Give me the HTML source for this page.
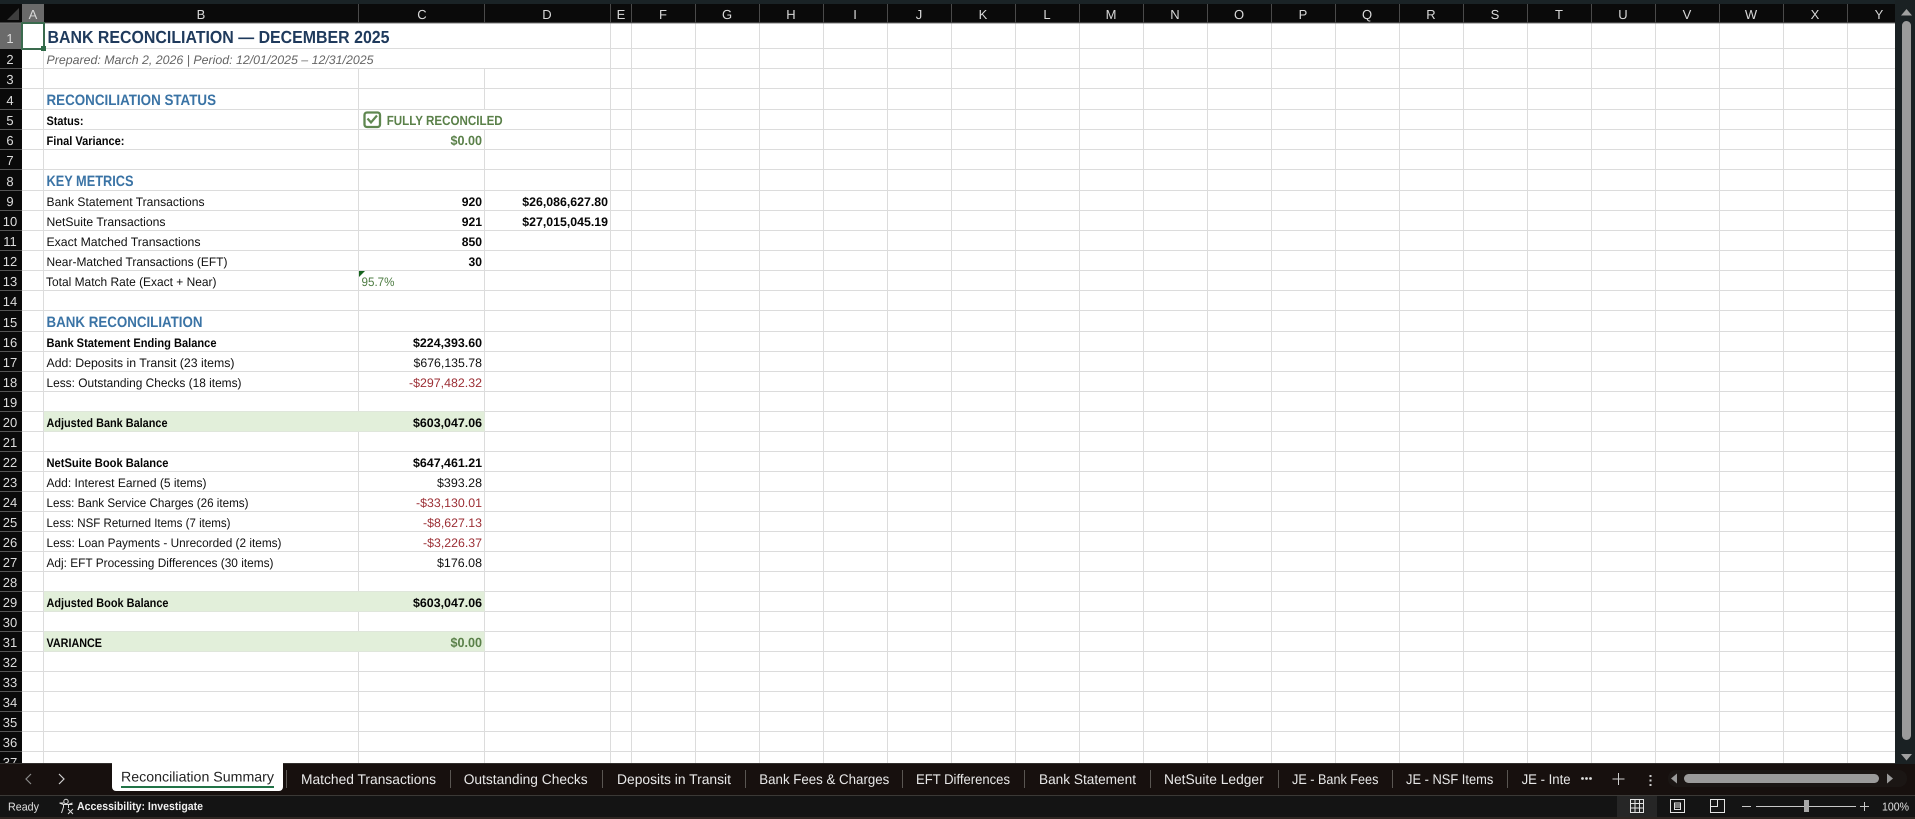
<!DOCTYPE html>
<html><head><meta charset="utf-8"><title>Bank Reconciliation</title>
<style>
html,body{margin:0;padding:0;background:#141414;overflow:hidden}
svg{display:block;text-rendering:geometricPrecision}
text{font-family:"Liberation Sans",Arial,sans-serif;white-space:pre}
.c{font-size:12.3px;fill:#111}
.b{font-size:12.3px;fill:#050505;font-weight:bold}
.r{font-size:12.3px;fill:#9c2f35}
.g{font-size:13.3px;fill:#5a8049;font-weight:bold}
.s{font-size:15px;fill:#3a73a5;font-weight:bold}
.rh{font-size:13px;fill:#dcdcdc;text-anchor:middle}
.ch{font-size:13px;fill:#d8d8d8;text-anchor:middle}
.t{font-size:14px;fill:#e8e8e8}
.st{font-size:11.5px;fill:#e0e0e0}
</style></head><body>
<svg width="1915" height="819" viewBox="0 0 1915 819" xmlns="http://www.w3.org/2000/svg">
<rect width="1915" height="819" fill="#141414"/>
<rect width="1915" height="5" fill="#1a2326"/>
<rect x="1895" width="20" height="763" fill="#1a2123"/>
<rect x="0" y="4" width="1895" height="19" fill="#0a0a0a"/>
<rect x="0" y="23" width="22" height="740" fill="#0a0a0a"/>
<rect x="22" y="23" width="1873" height="740" fill="#fff"/>
<path d="M22 48.5H1895M22 68.5H1895M22 88.5H1895M22 109.5H1895M22 129.5H1895M22 149.5H1895M22 169.5H1895M22 190.5H1895M22 210.5H1895M22 230.5H1895M22 250.5H1895M22 270.5H1895M22 290.5H1895M22 310.5H1895M22 331.5H1895M22 351.5H1895M22 371.5H1895M22 391.5H1895M22 411.5H1895M22 431.5H1895M22 451.5H1895M22 471.5H1895M22 491.5H1895M22 511.5H1895M22 531.5H1895M22 551.5H1895M22 571.5H1895M22 591.5H1895M22 611.5H1895M22 631.5H1895M22 651.5H1895M22 671.5H1895M22 691.5H1895M22 711.5H1895M22 731.5H1895M22 751.5H1895" stroke="#dcdcdc" fill="none"/>
<path d="M43.5 23V763M358.5 68V763M484.5 68V109M484.5 130V763M610.5 23V763M631.5 23V763M695.5 23V763M759.5 23V763M823.5 23V763M887.5 23V763M951.5 23V763M1015.5 23V763M1079.5 23V763M1143.5 23V763M1207.5 23V763M1271.5 23V763M1335.5 23V763M1399.5 23V763M1463.5 23V763M1527.5 23V763M1591.5 23V763M1655.5 23V763M1719.5 23V763M1783.5 23V763M1847.5 23V763" stroke="#dcdcdc" fill="none"/>
<rect x="44" y="411.5" width="440.5" height="20" fill="#e2efda"/>
<rect x="44" y="591.5" width="440.5" height="20" fill="#e2efda"/>
<rect x="44" y="631.5" width="440.5" height="20" fill="#e2efda"/>

<!-- headers -->
<rect x="22" y="4" width="22" height="19" fill="#6a6a6a"/>
<rect x="0" y="23" width="22" height="26" fill="#6a6a6a"/>
<polygon points="19,8 19,20 7,20" fill="#3e3e3e"/>
<rect x="0" y="22.5" width="1895" height="1" fill="#777"/>
<path d="M358.5 4V23M484.5 4V23M610.5 4V23M631.5 4V23M695.5 4V23M759.5 4V23M823.5 4V23M887.5 4V23M951.5 4V23M1015.5 4V23M1079.5 4V23M1143.5 4V23M1207.5 4V23M1271.5 4V23M1335.5 4V23M1399.5 4V23M1463.5 4V23M1527.5 4V23M1591.5 4V23M1655.5 4V23M1719.5 4V23M1783.5 4V23M1847.5 4V23" stroke="#4a4a4a" fill="none"/>
<path d="M0 68.5H22M0 88.5H22M0 109.5H22M0 129.5H22M0 149.5H22M0 169.5H22M0 190.5H22M0 210.5H22M0 230.5H22M0 250.5H22M0 270.5H22M0 290.5H22M0 310.5H22M0 331.5H22M0 351.5H22M0 371.5H22M0 391.5H22M0 411.5H22M0 431.5H22M0 451.5H22M0 471.5H22M0 491.5H22M0 511.5H22M0 531.5H22M0 551.5H22M0 571.5H22M0 591.5H22M0 611.5H22M0 631.5H22M0 651.5H22M0 671.5H22M0 691.5H22M0 711.5H22M0 731.5H22M0 751.5H22" stroke="#555" fill="none"/>
<g>
<text class="ch" x="33" y="19">A</text><text class="ch" x="201" y="19">B</text><text class="ch" x="422" y="19">C</text><text class="ch" x="547" y="19">D</text><text class="ch" x="621" y="19">E</text><text class="ch" x="663" y="19">F</text><text class="ch" x="727" y="19">G</text><text class="ch" x="791" y="19">H</text><text class="ch" x="855" y="19">I</text><text class="ch" x="919" y="19">J</text><text class="ch" x="983" y="19">K</text><text class="ch" x="1047" y="19">L</text><text class="ch" x="1111" y="19">M</text><text class="ch" x="1175" y="19">N</text><text class="ch" x="1239" y="19">O</text><text class="ch" x="1303" y="19">P</text><text class="ch" x="1367" y="19">Q</text><text class="ch" x="1431" y="19">R</text><text class="ch" x="1495" y="19">S</text><text class="ch" x="1559" y="19">T</text><text class="ch" x="1623" y="19">U</text><text class="ch" x="1687" y="19">V</text><text class="ch" x="1751" y="19">W</text><text class="ch" x="1815" y="19">X</text><text class="ch" x="1879" y="19">Y</text>
</g>
<g>
<text class="rh" x="10" y="43">1</text><text class="rh" x="10" y="64">2</text><text class="rh" x="10" y="84">3</text><text class="rh" x="10" y="105">4</text><text class="rh" x="10" y="125">5</text><text class="rh" x="10" y="145">6</text><text class="rh" x="10" y="165">7</text><text class="rh" x="10" y="186">8</text><text class="rh" x="10" y="206">9</text><text class="rh" x="10" y="226">10</text><text class="rh" x="10" y="246">11</text><text class="rh" x="10" y="266">12</text><text class="rh" x="10" y="286">13</text><text class="rh" x="10" y="306">14</text><text class="rh" x="10" y="327">15</text><text class="rh" x="10" y="347">16</text><text class="rh" x="10" y="367">17</text><text class="rh" x="10" y="387">18</text><text class="rh" x="10" y="407">19</text><text class="rh" x="10" y="427">20</text><text class="rh" x="10" y="447">21</text><text class="rh" x="10" y="467">22</text><text class="rh" x="10" y="487">23</text><text class="rh" x="10" y="507">24</text><text class="rh" x="10" y="527">25</text><text class="rh" x="10" y="547">26</text><text class="rh" x="10" y="567">27</text><text class="rh" x="10" y="587">28</text><text class="rh" x="10" y="607">29</text><text class="rh" x="10" y="627">30</text><text class="rh" x="10" y="647">31</text><text class="rh" x="10" y="667">32</text><text class="rh" x="10" y="687">33</text><text class="rh" x="10" y="707">34</text><text class="rh" x="10" y="727">35</text><text class="rh" x="10" y="747">36</text><text class="rh" x="10" y="767">37</text>
</g>

<!-- selected cell -->
<rect x="22" y="23" width="22" height="26" fill="none" stroke="#3a6b4e" stroke-width="2"/>
<rect x="41" y="46" width="5" height="5" fill="#2f6a48"/>

<!-- cells -->
<text x="47.5" y="43" font-size="17.5" font-weight="bold" fill="#1f3a5c" textLength="342" lengthAdjust="spacingAndGlyphs">BANK RECONCILIATION — DECEMBER 2025</text>
<text x="46.5" y="64" font-size="12.3" font-style="italic" fill="#666" textLength="327" lengthAdjust="spacingAndGlyphs">Prepared: March 2, 2026 | Period: 12/01/2025 – 12/31/2025</text>
<text class="s" x="46.5" y="105" textLength="169.5" lengthAdjust="spacingAndGlyphs">RECONCILIATION STATUS</text>
<text class="b" x="46.5" y="125" textLength="37" lengthAdjust="spacingAndGlyphs">Status:</text>
<text class="b" x="46.5" y="145" textLength="78" lengthAdjust="spacingAndGlyphs">Final Variance:</text>
<rect x="364.5" y="112.5" width="15.5" height="14.5" rx="2.5" fill="none" stroke="#5f8750" stroke-width="2.3"/>
<path d="M367.5 118.5L371 122.5L377 115.5" fill="none" stroke="#5f8750" stroke-width="2.2"/>
<text class="g" x="386.7" y="125" textLength="116" lengthAdjust="spacingAndGlyphs">FULLY RECONCILED</text>
<text class="g" x="450.5" y="145" textLength="31.5" lengthAdjust="spacingAndGlyphs">$0.00</text>

<text class="s" x="46.5" y="186" textLength="87" lengthAdjust="spacingAndGlyphs">KEY METRICS</text>
<text class="c" x="46.5" y="206" textLength="158" lengthAdjust="spacingAndGlyphs">Bank Statement Transactions</text>
<text class="c" x="46.5" y="226" textLength="119" lengthAdjust="spacingAndGlyphs">NetSuite Transactions</text>
<text class="c" x="46.5" y="246" textLength="154" lengthAdjust="spacingAndGlyphs">Exact Matched Transactions</text>
<text class="c" x="46.5" y="266" textLength="181" lengthAdjust="spacingAndGlyphs">Near-Matched Transactions (EFT)</text>
<text class="c" x="46" y="286" textLength="170.5" lengthAdjust="spacingAndGlyphs">Total Match Rate (Exact + Near)</text>
<text class="b" x="461.7" y="206" textLength="20.3" lengthAdjust="spacingAndGlyphs">920</text>
<text class="b" x="461.7" y="226" textLength="20.3" lengthAdjust="spacingAndGlyphs">921</text>
<text class="b" x="461.7" y="246" textLength="20.3" lengthAdjust="spacingAndGlyphs">850</text>
<text class="b" x="468.5" y="266" textLength="13.5" lengthAdjust="spacingAndGlyphs">30</text>
<text class="b" x="522.3" y="206" textLength="85.7" lengthAdjust="spacingAndGlyphs">$26,086,627.80</text>
<text class="b" x="522.3" y="226" textLength="85.7" lengthAdjust="spacingAndGlyphs">$27,015,045.19</text>
<polygon points="359,271 365,271 359,277" fill="#17641f"/>
<text x="361.5" y="286" font-size="12.3" fill="#4f7d44" textLength="33" lengthAdjust="spacingAndGlyphs">95.7%</text>

<text class="s" x="46.5" y="327" textLength="156" lengthAdjust="spacingAndGlyphs">BANK RECONCILIATION</text>
<text class="b" x="46.5" y="347" textLength="170" lengthAdjust="spacingAndGlyphs">Bank Statement Ending Balance</text>
<text class="c" x="46.5" y="367" textLength="188" lengthAdjust="spacingAndGlyphs">Add: Deposits in Transit (23 items)</text>
<text class="c" x="46.5" y="387" textLength="195" lengthAdjust="spacingAndGlyphs">Less: Outstanding Checks (18 items)</text>
<text class="b" x="413" y="347" textLength="69" lengthAdjust="spacingAndGlyphs">$224,393.60</text>
<text class="c" x="413.5" y="367" textLength="68.5" lengthAdjust="spacingAndGlyphs">$676,135.78</text>
<text class="r" x="409" y="387" textLength="73" lengthAdjust="spacingAndGlyphs">-$297,482.32</text>
<text class="b" x="46.5" y="427" textLength="121" lengthAdjust="spacingAndGlyphs">Adjusted Bank Balance</text>
<text class="b" x="413" y="427" textLength="69" lengthAdjust="spacingAndGlyphs">$603,047.06</text>
<text class="b" x="46.5" y="467" textLength="122" lengthAdjust="spacingAndGlyphs">NetSuite Book Balance</text>
<text class="b" x="413" y="467" textLength="69" lengthAdjust="spacingAndGlyphs">$647,461.21</text>
<text class="c" x="46.5" y="487" textLength="160" lengthAdjust="spacingAndGlyphs">Add: Interest Earned (5 items)</text>
<text class="c" x="437" y="487" textLength="45" lengthAdjust="spacingAndGlyphs">$393.28</text>
<text class="c" x="46.5" y="507" textLength="202" lengthAdjust="spacingAndGlyphs">Less: Bank Service Charges (26 items)</text>
<text class="r" x="416" y="507" textLength="66" lengthAdjust="spacingAndGlyphs">-$33,130.01</text>
<text class="c" x="46.5" y="527" textLength="184" lengthAdjust="spacingAndGlyphs">Less: NSF Returned Items (7 items)</text>
<text class="r" x="423" y="527" textLength="59" lengthAdjust="spacingAndGlyphs">-$8,627.13</text>
<text class="c" x="46.5" y="547" textLength="235" lengthAdjust="spacingAndGlyphs">Less: Loan Payments - Unrecorded (2 items)</text>
<text class="r" x="423" y="547" textLength="59" lengthAdjust="spacingAndGlyphs">-$3,226.37</text>
<text class="c" x="46.5" y="567" textLength="227" lengthAdjust="spacingAndGlyphs">Adj: EFT Processing Differences (30 items)</text>
<text class="c" x="437" y="567" textLength="45" lengthAdjust="spacingAndGlyphs">$176.08</text>
<text class="b" x="46.5" y="607" textLength="122" lengthAdjust="spacingAndGlyphs">Adjusted Book Balance</text>
<text class="b" x="413" y="607" textLength="69" lengthAdjust="spacingAndGlyphs">$603,047.06</text>
<text class="b" x="46.5" y="647" textLength="55.5" lengthAdjust="spacingAndGlyphs">VARIANCE</text>
<text class="g" x="450.5" y="647" textLength="31.5" lengthAdjust="spacingAndGlyphs">$0.00</text>

<!-- vertical scrollbar -->
<polygon points="1906.5,9 1912,15.5 1901,15.5" fill="#a0a0a0"/>
<rect x="1902" y="21" width="9" height="719" rx="4.5" fill="#9b9b9b"/>
<polygon points="1901,754 1912,754 1906.5,760.5" fill="#a0a0a0"/>

<!-- tab bar -->
<rect x="0" y="764" width="1915" height="31" fill="#17100e"/>
<rect x="0" y="763" width="1895" height="1" fill="#33302e"/>
<rect x="1895" y="763" width="20" height="1" fill="#1a2123"/>
<rect x="0" y="795" width="1915" height="1" fill="#3b3936"/>
<path d="M31 774L26 779L31 784" fill="none" stroke="#8a8a8a" stroke-width="1.2"/>
<path d="M59 774L64 779L59 784" fill="none" stroke="#d0d0d0" stroke-width="1.2"/>
<path d="M112 763H283V787a4 4 0 0 1 -4 4H116a4 4 0 0 1 -4 -4Z" fill="#fff"/>
<text x="121" y="781.5" font-size="14" fill="#222" textLength="153" lengthAdjust="spacingAndGlyphs">Reconciliation Summary</text>
<rect x="121" y="786" width="153" height="2" fill="#217346"/>
<path d="M286.5 770V788M450.5 770V788M602.5 770V788M745.5 770V788M902.5 770V788M1024.5 770V788M1150.5 770V788M1278.5 770V788M1392.5 770V788M1507.5 770V788" stroke="#5a5652" fill="none"/>
<text class="t" x="301" y="784" textLength="135" lengthAdjust="spacingAndGlyphs">Matched Transactions</text>
<text class="t" x="463.7" y="784" textLength="124" lengthAdjust="spacingAndGlyphs">Outstanding Checks</text>
<text class="t" x="617" y="784" textLength="114" lengthAdjust="spacingAndGlyphs">Deposits in Transit</text>
<text class="t" x="759.3" y="784" textLength="130" lengthAdjust="spacingAndGlyphs">Bank Fees &amp; Charges</text>
<text class="t" x="916" y="784" textLength="94" lengthAdjust="spacingAndGlyphs">EFT Differences</text>
<text class="t" x="1039" y="784" textLength="97" lengthAdjust="spacingAndGlyphs">Bank Statement</text>
<text class="t" x="1164" y="784" textLength="99.7" lengthAdjust="spacingAndGlyphs">NetSuite Ledger</text>
<text class="t" x="1292" y="784" textLength="86.4" lengthAdjust="spacingAndGlyphs">JE - Bank Fees</text>
<text class="t" x="1406" y="784" textLength="87.3" lengthAdjust="spacingAndGlyphs">JE - NSF Items</text>
<text class="t" x="1521.6" y="784" textLength="49" lengthAdjust="spacingAndGlyphs">JE - Inte</text>
<circle cx="1582.5" cy="778.5" r="1.4" fill="#ddd"/><circle cx="1586.5" cy="778.5" r="1.4" fill="#ddd"/><circle cx="1590.5" cy="778.5" r="1.4" fill="#ddd"/>
<path d="M1612.5 779H1624.5M1618.5 773V785" stroke="#d0d0d0"/>
<rect x="1649.5" y="775" width="2" height="2" fill="#ccc"/><rect x="1649.5" y="779.5" width="2" height="2" fill="#ccc"/><rect x="1649.5" y="784" width="2" height="2" fill="#ccc"/>
<rect x="1668" y="770" width="239" height="17" rx="8" fill="#1b1614"/>
<polygon points="1671,778.5 1677,773.5 1677,783.5" fill="#9a9a9a"/>
<rect x="1684" y="774" width="195" height="9" rx="4.5" fill="#9b9b9b"/>
<polygon points="1893,778.5 1887,773.5 1887,783.5" fill="#9a9a9a"/>

<!-- status bar -->
<rect x="0" y="817" width="1915" height="2" fill="#2e2622"/>
<text class="st" x="8" y="810.5" textLength="31" lengthAdjust="spacingAndGlyphs">Ready</text>
<circle cx="66" cy="801.5" r="2.2" fill="none" stroke="#ddd"/>
<path d="M59.5 803L63.5 804.5V807L61.5 813M72.5 803L68.5 804.5V808M59.5 803H63.5M68.5 804.5H72.5M63.5 804.5H68.5" fill="none" stroke="#ddd"/>
<path d="M68 809L73 814M73 809L68 814" stroke="#ddd"/>
<text x="77" y="810" font-size="11.5" font-weight="bold" fill="#eee" textLength="126" lengthAdjust="spacingAndGlyphs">Accessibility: Investigate</text>
<rect x="1617" y="796" width="40" height="21" fill="#262626"/>
<path d="M1630.5 799.5H1643.5V812.5H1630.5ZM1630.5 803.5H1643.5M1630.5 808H1643.5M1635 799.5V812.5M1639.5 799.5V812.5" fill="none" stroke="#e4e4e4"/>
<path d="M1670.5 799.5H1684.5V812.5H1670.5ZM1674.5 803H1680.5V809.5H1674.5ZM1674.5 805H1680.5M1674.5 807H1680.5" fill="none" stroke="#e4e4e4"/>
<path d="M1710.5 799.5H1724.5V812.5H1710.5ZM1710.5 806.5H1717.5V799.5" fill="none" stroke="#e4e4e4"/>
<path d="M1742 806.5H1751M1756 806.5H1856M1860 806.5H1869M1864.5 802V811" stroke="#c8c8c8"/>
<rect x="1804" y="800" width="5" height="12" fill="#a8a8a8"/>
<text class="st" x="1882" y="810.5" textLength="27" lengthAdjust="spacingAndGlyphs">100%</text>
</svg>
</body></html>
